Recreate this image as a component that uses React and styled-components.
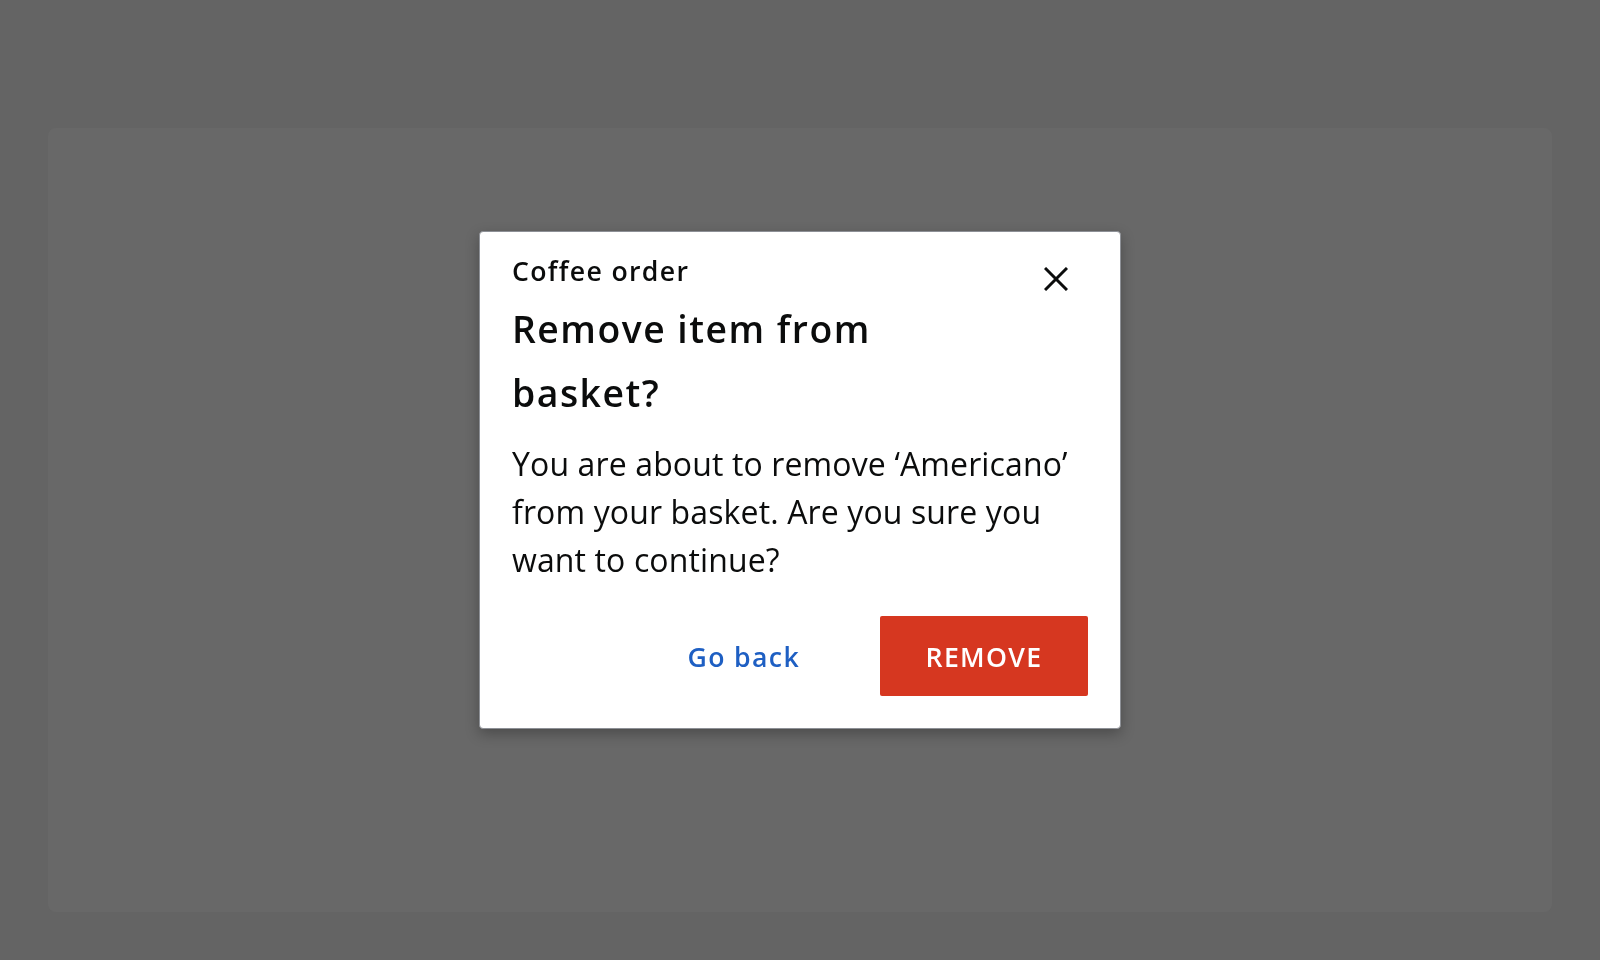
import React from "react"
import styled, { createGlobalStyle } from "styled-components"

const GlobalStyle = createGlobalStyle`
  html, body {
    margin: 0;
    padding: 0;
    background: #646464;
    font-family: "Open Sans", "Noto Sans", sans-serif;
  }
`

const Page = styled.div`
  height: 960px;
  padding: 128px 48px 48px;
  box-sizing: border-box;
`

const Panel = styled.div`
  height: 784px;
  border-radius: 8px;
  background: #686868;
`

const Overlay = styled.div`
  position: fixed;
  inset: 0;
  display: flex;
  align-items: center;
  justify-content: center;
`

const Dialog = styled.div`
  width: 642px;
  background: #fff;
  border: 1.33px solid #8d9096;
  border-radius: 4px;
  box-shadow: 0 5px 14px rgba(0, 0, 0, 0.28);
  padding: 21px 32px 32px;
  box-sizing: border-box;
  color: #0b0c0c;
`

const Header = styled.div`
  display: flex;
  align-items: flex-start;
  gap: 32px;
`

const Titles = styled.div`
  flex: 1;
`

const Label = styled.div`
  font-size: 26.67px;
  line-height: 36px;
  font-weight: 600;
  letter-spacing: 0.05em;
`

const Heading = styled.h2`
  margin: 8px 0 0;
  font-size: 37.33px;
  line-height: 64px;
  font-weight: 600;
  letter-spacing: 0.04em;
`

const CloseButton = styled.button`
  width: 64px;
  height: 64px;
  margin-top: -6px;
  flex: none;
  display: flex;
  align-items: center;
  justify-content: center;
  border: 0;
  padding: 0;
  background: transparent;
  color: #0b0c0c;
  cursor: pointer;
`

const Body = styled.p`
  margin: 15px 0 0;
  font-size: 32px;
  line-height: 48px;
  letter-spacing: 0.004em;
`

const Actions = styled.div`
  display: flex;
  justify-content: flex-end;
  align-items: center;
  gap: 48px;
  margin-top: 32px;
`

const Button = styled.button`
  height: 80px;
  padding: 0 ${p => (p.primary ? "40px" : "0")};
  min-width: ${p => (p.primary ? "208px" : "auto")};
  border: 0;
  border-radius: 2px;
  font-family: inherit;
  font-size: 26.67px;
  font-weight: 600;
  letter-spacing: 0.05em;
  background: ${p => (p.primary ? "#d63720" : "transparent")};
  color: ${p => (p.primary ? "#fff" : "#1e5fc3")};
  cursor: pointer;
`

const GoBack = styled(Button)`
  margin-right: 32px;
`

const App = () => (
  <>
    <GlobalStyle />
    <Page>
      <Panel />
    </Page>
    <Overlay>
      <Dialog role="dialog">
        <Header>
          <Titles>
            <Label>Coffee order</Label>
            <Heading>Remove item from basket?</Heading>
          </Titles>
          <CloseButton aria-label="Close">
            <svg width="24" height="24" viewBox="0 0 24 24">
              <path d="M1 1L23 23M23 1L1 23" stroke="currentColor" strokeWidth="3" />
            </svg>
          </CloseButton>
        </Header>
        <Body>
          You are about to remove ‘Americano’ from your basket. Are you sure you want to continue?
        </Body>
        <Actions>
          <GoBack>Go back</GoBack>
          <Button primary>REMOVE</Button>
        </Actions>
      </Dialog>
    </Overlay>
  </>
)

export default App
